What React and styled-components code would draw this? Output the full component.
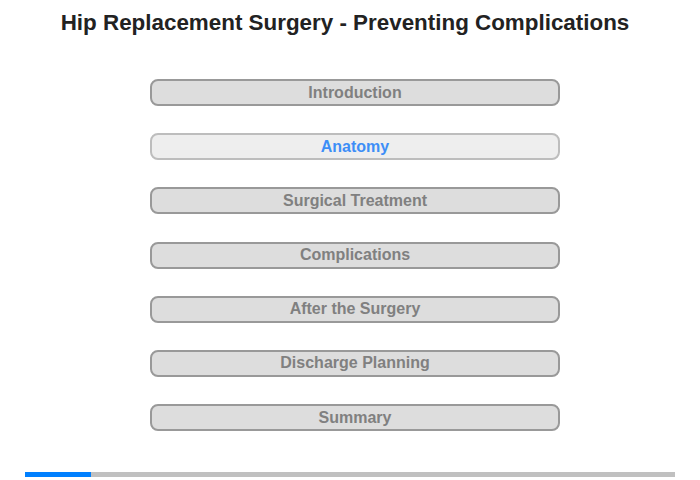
import React from 'react'
import styled, { createGlobalStyle } from 'styled-components'

const GlobalStyle = createGlobalStyle`
    body {
        margin: 0;
        background: #fff;
        font-family: "Liberation Sans", Arial, sans-serif;
    }
`

const sections = [
    'Introduction',
    'Anatomy',
    'Surgical Treatment',
    'Complications',
    'After the Surgery',
    'Discharge Planning',
    'Summary',
]

function App() {
    const current = 1
    const progress = 66 / 650
    return (
        <Page>
            <GlobalStyle />
            <Title>Hip Replacement Surgery - Preventing Complications</Title>
            <Menu>
                {sections.map((s, i) => (
                    <MenuButton key={s} active={i === current ? 1 : 0}>{s}</MenuButton>
                ))}
            </Menu>
            <Track>
                <Fill style={{ width: `${progress * 100}%` }} />
            </Track>
        </Page>
    )
}

const Page = styled.div`
    width: 700px;
    height: 480px;
    display: flex;
    flex-direction: column;
    overflow: hidden;
`

const Title = styled.h1`
    margin: 10px 10px 0 0;
    font-size: 22.4px;
    line-height: 26px;
    font-weight: bold;
    color: #222;
    text-align: center;
`

const Menu = styled.div`
    width: 410px;
    margin: 43px 0 0 150px;
    display: flex;
    flex-direction: column;
    gap: 27.2px;
`

const MenuButton = styled.div`
    box-sizing: border-box;
    height: 27px;
    border: 2px solid ${p => (p.active ? '#bdbdbd' : '#999')};
    border-radius: 8px;
    background: ${p => (p.active ? '#eeeeee' : '#dddddd')};
    color: ${p => (p.active ? '#3d8ef7' : '#808080')};
    font-size: 16px;
    font-weight: bold;
    display: flex;
    align-items: center;
    justify-content: center;
    cursor: pointer;
`

const Track = styled.div`
    margin: 41px 0 0 25px;
    width: 650px;
    height: 5px;
    background: #c0c0c0;
`

const Fill = styled.div`
    height: 100%;
    background: #0080ff;
`

export default App
